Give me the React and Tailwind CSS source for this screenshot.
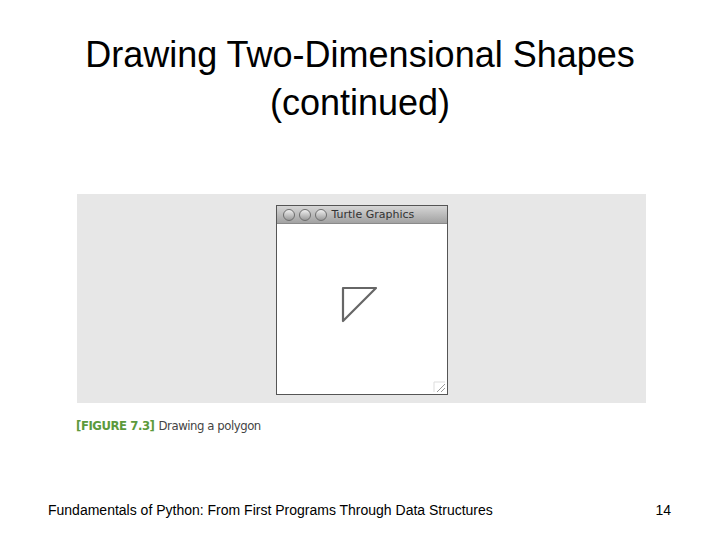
import React from "react";

function TrafficLight() {
  return (
    <span className="w-[12px] h-[12px] rounded-full border border-[#6e6e6e] bg-gradient-to-b from-[#f0f0f0] via-[#c4c4c4] to-[#9a9a9a]" />
  );
}

function TurtleWindow() {
  return (
    <div className="w-[172px] h-[190px] border border-[#555] bg-white flex flex-col">
      {/* title bar */}
      <div className="h-[18px] flex items-center gap-[4px] pl-[6px] bg-gradient-to-b from-[#d6d6d6] to-[#a2a2a2] border-b border-[#8a8a8a]">
        <TrafficLight />
        <TrafficLight />
        <TrafficLight />
        <span
          className="text-[11px] text-[#333] leading-none ml-[1px]"
          style={{ fontFamily: '"DejaVu Sans", sans-serif' }}
        >
          Turtle Graphics
        </span>
      </div>
      {/* canvas */}
      <div className="relative flex-1">
        <svg className="absolute left-0 top-0" width="170" height="170">
          <path d="M66 64 L99 64 L66 97 Z" fill="none" stroke="#666" strokeWidth="2.2" strokeLinejoin="round" />
          <path d="M160 168 L168 160 M164 168 L168 164" stroke="#999" strokeWidth="1" />
          <path d="M157 168 L157 158 L168 158" fill="none" stroke="#ddd" strokeWidth="1" />
        </svg>
      </div>
    </div>
  );
}

export default function App() {
  return (
    <div
      className="w-[720px] h-[540px] bg-white flex flex-col relative"
      style={{ fontFamily: '"Liberation Sans", Arial, sans-serif' }}
    >
      <div className="pt-[31px] text-center text-[36px] leading-[48px] text-black">
        <div>Drawing Two-Dimensional Shapes</div>
        <div>(continued)</div>
      </div>

      <div className="mt-[67px] ml-[77px] w-[569px] h-[209px] bg-[#e7e7e7] flex justify-center items-start pt-[11px]">
        <TurtleWindow />
      </div>

      <div
        className="ml-[76px] mt-[16px] text-[13px] leading-none tracking-[-0.45px] flex items-center"
        style={{ fontFamily: '"DejaVu Sans Condensed", "DejaVu Sans", sans-serif' }}
      >
        <span className="text-[#5c9a3c] font-semibold">[FIGURE 7.3]</span>
        <span className="text-[#444] ml-[4px]">Drawing a polygon</span>
      </div>

      <div className="mt-auto mb-[19px] flex justify-between items-end pl-[48px] pr-[49px] text-[14px] text-black">
        <span>Fundamentals of Python: From First Programs Through Data Structures</span>
        <span>14</span>
      </div>
    </div>
  );
}
